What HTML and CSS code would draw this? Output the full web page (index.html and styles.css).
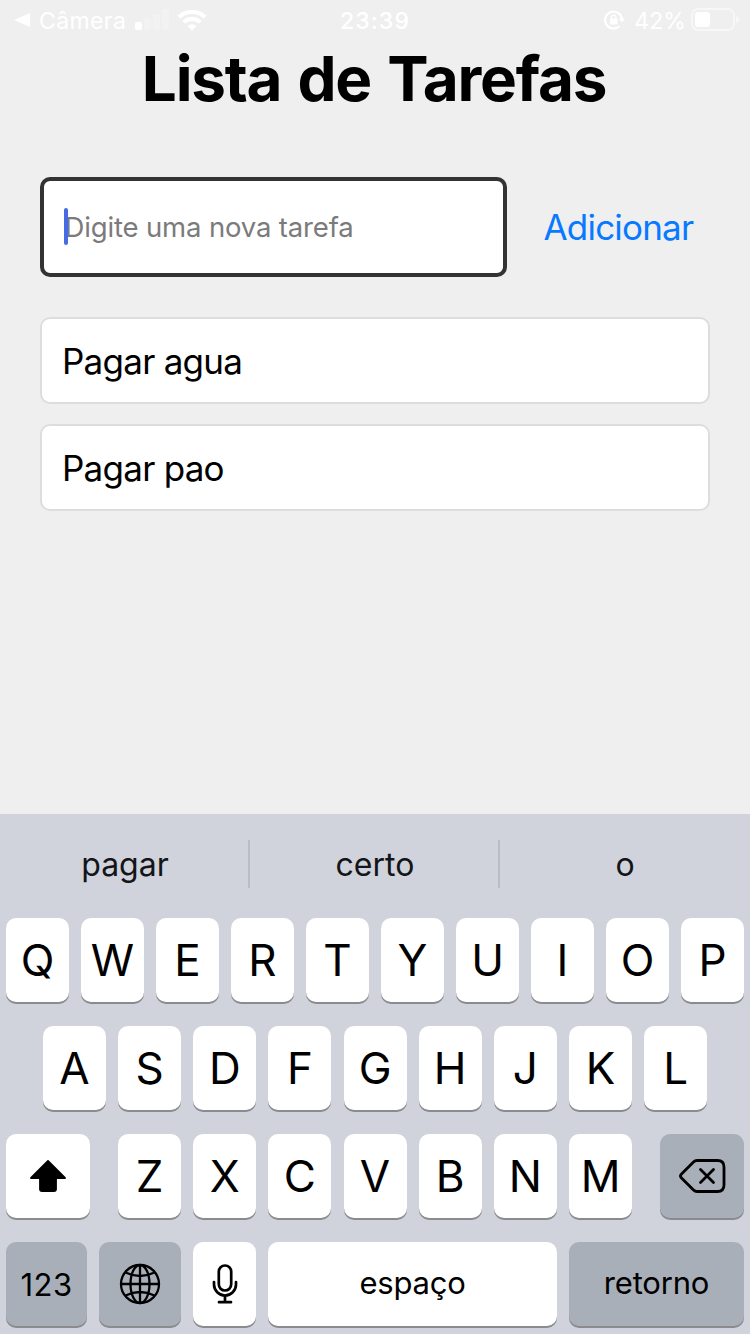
FILE: index.html
```html
<!DOCTYPE html>
<html lang="pt-BR">
<head>
<meta charset="utf-8">
<title>Lista de Tarefas</title>
<link rel="stylesheet" href="styles.css">
</head>
<body>
<div class="screen">
  <header class="status">
    <div class="status-left">
      <svg class="back" width="16" height="14" viewBox="0 0 16 14"><path d="M0 7 16 0v14z" fill="#fff"/></svg>
      <span class="camera">Câmera</span>
      <svg class="signal" width="34" height="22" viewBox="0 0 34 22"><g fill="#fff"><rect x="0" y="13" width="7" height="8" rx="2"/><g opacity=".22"><rect x="9" y="9" width="7" height="12" rx="2"/><rect x="18" y="5" width="7" height="16" rx="2"/><rect x="27" y="0" width="7" height="21" rx="2"/></g></g></svg>
      <svg class="wifi" width="30" height="22" viewBox="0 0 30 22"><g fill="none" stroke="#fff" stroke-width="4.2"><path d="M1.8 8.2a18.8 18.8 0 0 1 26.4 0"/><path d="M6.8 13.2a11.7 11.7 0 0 1 16.4 0"/></g><path d="M10.4 17a6.6 6.6 0 0 1 9.2 0L15 21.8z" fill="#fff"/></svg>
    </div>
    <span class="clock">23:39</span>
    <div class="status-right">
      <svg class="lock" width="21" height="20" viewBox="0 0 21 20"><path d="M15.300 16.300A8.500 8.500 0 1 1 18 9" fill="none" stroke="#fff" stroke-width="2.200"/><path d="M15 8.500h6l-3 4z" fill="#fff"/><rect x="6" y="8.600" width="7.400" height="6" rx="1" fill="#fff"/><path d="M7.500 9V7.200a2.200 2.200 0 0 1 4.400 0V9" fill="none" stroke="#fff" stroke-width="1.400"/></svg>
      <span class="percent">42%</span>
      <svg class="battery" width="49" height="24" viewBox="0 0 49 24"><rect x="1" y="1" width="42" height="21" rx="6" fill="none" stroke="#fff" stroke-width="2" opacity=".5"/><rect x="4" y="4" width="15" height="15" rx="3" fill="#fff"/><path d="M45 8q3 1 3 3.500t-3 3.500z" fill="#fff" opacity=".5"/></svg>
    </div>
  </header>

  <main class="app">
    <h1 class="title">Lista de Tarefas</h1>
    <div class="form">
      <div class="field"><span class="caret"></span><span class="placeholder">Digite uma nova tarefa</span></div>
      <div class="add">Adicionar</div>
    </div>
    <div class="tasks">
      <div class="task">Pagar agua</div>
      <div class="task">Pagar pao</div>
    </div>
  </main>

  <section class="keyboard">
    <div class="suggestions">
      <div class="suggestion">pagar</div>
      <div class="suggestion">certo</div>
      <div class="suggestion">o</div>
    </div>
    <div class="row">
      <div class="key">Q</div><div class="key">W</div><div class="key">E</div><div class="key">R</div><div class="key">T</div><div class="key">Y</div><div class="key">U</div><div class="key">I</div><div class="key">O</div><div class="key">P</div>
    </div>
    <div class="row row-middle">
      <div class="key">A</div><div class="key">S</div><div class="key">D</div><div class="key">F</div><div class="key">G</div><div class="key">H</div><div class="key">J</div><div class="key">K</div><div class="key">L</div>
    </div>
    <div class="row row-split">
      <div class="key wide"><svg width="38" height="34" viewBox="0 0 38 34"><path d="M19 2 36 19H27V30a2 2 0 0 1-2 2H13a2 2 0 0 1-2-2V19H2z" fill="#000" stroke="#000" stroke-width="1.800" stroke-linejoin="round"/></svg></div>
      <div class="letters"><div class="key">Z</div><div class="key">X</div><div class="key">C</div><div class="key">V</div><div class="key">B</div><div class="key">N</div><div class="key">M</div></div>
      <div class="key wide gray"><svg width="48" height="36" viewBox="0 0 48 36"><g fill="none" stroke="#000" stroke-width="2.800" stroke-linecap="round" stroke-linejoin="round"><path d="M19 2.500H39.500Q46 2.500 46 9V27Q46 33.500 39.500 33.500H19Q17 33.500 15.500 32L3.500 20Q1.500 18 3.500 16L15.500 4Q17 2.500 19 2.500z"/><path d="m22.500 11.500 13 13m0-13-13 13"/></g></svg></div>
    </div>
    <div class="row">
      <div class="key num gray"><span class="label digits">123</span></div>
      <div class="key globe gray"><svg width="42" height="42" viewBox="0 0 42 42"><g fill="none" stroke="#000" stroke-width="2.300"><circle cx="21" cy="21" r="19"/><ellipse cx="21" cy="21" rx="9.500" ry="19"/><path d="M21 2v38M2 21h38M6.500 9.500Q21 16.500 35.500 9.500M6.500 32.500Q21 25.500 35.500 32.500"/></g></svg></div>
      <div class="key"><svg width="26" height="40" viewBox="0 0 26 40"><g fill="none" stroke="#000" stroke-width="2.700" stroke-linecap="round"><rect x="6.800" y="1.500" width="12.400" height="25" rx="6.200"/><path d="M2 18v2.500a11 11 0 0 0 22 0V18M13 31.500V38M7 38.200h12"/></g></svg></div>
      <div class="key space"><span class="label">espaço</span></div>
      <div class="key return gray"><span class="label">retorno</span></div>
    </div>
  </section>
</div>
</body>
</html>
```
FILE: styles.css
```css
* { box-sizing: border-box; }
body { margin: 0; font-family: Inter, "Liberation Sans", sans-serif; color: #000; }
svg { display: block; flex: none; }
.screen { width: 750px; height: 1334px; background: #efefef; display: flex; flex-direction: column; overflow: hidden; }

.status { height: 40px; display: grid; grid-template-columns: 1fr auto 1fr; color: #fff; font-size: 23px; line-height: 42px; }
.status-left, .status-right { display: flex; align-items: center; height: 40px; }
.status-left { padding-left: 14px; }
.status-right { justify-content: flex-end; padding-right: 10px; }
.camera { margin-left: 9px; padding-top: 1px; letter-spacing: .4px; }
.signal { margin-left: 9px; }
.wifi { margin-left: 8px; }
.clock { font-weight: 500; letter-spacing: 1.100px; }
.percent { margin: 0 5px 0 9px; padding-top: 1px; letter-spacing: .1px; }

.app { height: 774px; padding: 0 40px; }
.title { margin: 0; height: 77px; line-height: 78px; font-size: 62px; font-weight: 700; text-align: center; letter-spacing: -1.250px; word-spacing: 2.800px; padding-right: 2px; white-space: nowrap; }
.form { margin-top: 60px; display: flex; height: 100px; }
.field { width: 467px; border: 4px solid #333; border-radius: 10px; background: #fff; display: flex; align-items: center; padding-left: 20px; }
.caret { width: 4px; height: 37px; border-radius: 2px; background: #466be3; margin: -1px -4px 0 0; z-index: 1; }
.placeholder { font-size: 27.500px; letter-spacing: -.15px; color: #7b7b7b; padding-left: .5px; white-space: nowrap; }
.add { flex: 1; padding-left: 36.500px; display: flex; align-items: center; font-size: 35px; letter-spacing: -.8px; color: #087aff; }
.tasks { margin-top: 40px; display: grid; gap: 20px; }
.task { height: 87px; border: 2px solid #ddd; border-radius: 10px; background: #fff; padding-left: 20px; display: flex; align-items: center; font-size: 35px; letter-spacing: -.75px; }

.keyboard { height: 520px; background: #d0d3db; }
.suggestions { height: 104px; display: grid; grid-template-columns: repeat(3, 1fr); align-items: center; padding-bottom: 4px; }
.suggestion { height: 48px; display: flex; align-items: center; justify-content: center; padding-left: 2px; font-size: 32px; color: #131518; border-right: 2px solid #b9bdc5; }
.suggestion:last-child { border-right: 0; padding-left: 0; }
.row { display: flex; gap: 12px; height: 84px; margin-bottom: 24px; padding: 0 6px; }
.row-middle { gap: 12.150px; padding: 0 43px; }
.row-split { gap: 28px; }
.letters { display: flex; gap: 12.180px; flex: 1; }
.key { width: 63px; height: 84px; flex: none; border-radius: 10px; background: #fff; box-shadow: 0 2px 0 #898b8f; display: flex; align-items: center; justify-content: center; font-size: 44px; font-weight: 400; }
.wide { width: 84px; }
.gray { background: #a9afb9; }
.num { width: 81px; }
.globe { width: 82px; }
.space { width: 289px; }
.return { width: 175px; }
.label { font-size: 31px; letter-spacing: -.2px; padding-bottom: 3px; }
.digits { padding: 0; letter-spacing: .5px; }
```
